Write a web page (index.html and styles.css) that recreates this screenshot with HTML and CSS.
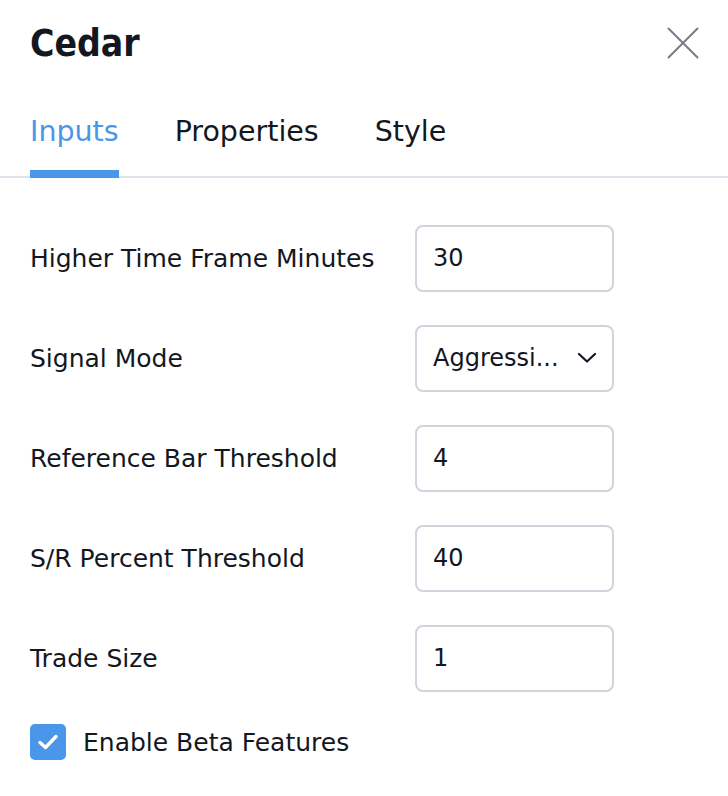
FILE: index.html
```html
<!DOCTYPE html>
<html lang="en-US">
    <head>
        <meta charset="utf-8">
        <link rel="stylesheet" href="styles.css">
    </head>
    <body>
        <div class="dialog">
            <div class="header">
                <h2 class="title">Cedar</h2>
                <button class="close" aria-label="Close">
                    <svg width="32" height="32" viewBox="0 0 32 32">
                        <path d="M1.5 1.5 L30.5 30.5 M30.5 1.5 L1.5 30.5" stroke="#787b86" stroke-width="2" stroke-linecap="round" fill="none"/>
                    </svg>
                </button>
            </div>
            <div class="tabs">
                <div class="tab active">Inputs</div>
                <div class="tab">Properties</div>
                <div class="tab">Style</div>
            </div>
            <div class="content">
                <div class="row">
                    <div class="label">Higher Time Frame Minutes</div>
                    <div class="field">30</div>
                </div>
                <div class="row">
                    <div class="label">Signal Mode</div>
                    <div class="field select">
                        <span class="value">Aggressi...</span>
                        <svg class="caret" width="20" height="12" viewBox="0 0 20 12">
                            <path d="M2 2 L10 9.5 L18 2" stroke="#131722" stroke-width="2.2" fill="none" stroke-linecap="round" stroke-linejoin="round"/>
                        </svg>
                    </div>
                </div>
                <div class="row">
                    <div class="label">Reference Bar Threshold</div>
                    <div class="field">4</div>
                </div>
                <div class="row">
                    <div class="label">S/R Percent Threshold</div>
                    <div class="field">40</div>
                </div>
                <div class="row">
                    <div class="label">Trade Size</div>
                    <div class="field">1</div>
                </div>
                <label class="check">
                    <span class="box">
                        <svg width="22" height="18" viewBox="0 0 22 18">
                            <path d="M3 9.5 L8.5 14.5 L19 3.5" stroke="#fff" stroke-width="3.4" fill="none" stroke-linecap="round" stroke-linejoin="round"/>
                        </svg>
                    </span>
                    Enable Beta Features
                </label>
            </div>
        </div>
    </body>
</html>
```

FILE: styles.css
```css
body{
    margin: 0;
    background-color: #fff;
    color: #131722;
    font-family: "DejaVu Sans", sans-serif;
}
div.dialog{
    width: 728px;
}
div.header{
    display: flex;
    align-items: center;
    justify-content: space-between;
    height: 86px;
    padding: 0 29px 0 30px;
}
h2.title{
    margin: 0;
    font-family: "DejaVu Sans Condensed", "DejaVu Sans", sans-serif;
    font-size: 37px;
    font-weight: bold;
    color: #131722;
}
button.close{
    border: none;
    background: none;
    padding: 0;
    display: flex;
}
div.tabs{
    display: flex;
    gap: 56px;
    padding: 0 30px;
    border-bottom: 2px solid #e0e3eb;
    height: 90px;
}
div.tab{
    font-size: 28.5px;
    padding-top: 29px;
    color: #131722;
}
div.tab.active{
    color: #4a96e9;
    border-bottom: 8px solid #4a96e9;
    margin-bottom: -2px;
}
div.content{
    padding: 47px 30px 0 30px;
}
div.row{
    display: flex;
    align-items: center;
    height: 66px;
    margin-bottom: 34px;
}
div.label{
    width: 385px;
    font-size: 25px;
}
div.field{
    box-sizing: border-box;
    width: 199px;
    height: 67px;
    border: 2px solid #d1d4dc;
    border-radius: 8px;
    padding: 0 16px;
    display: flex;
    align-items: center;
    font-size: 24px;
}
div.field.select{
    justify-content: space-between;
    padding-right: 15px;
}
label.check{
    display: flex;
    align-items: center;
    gap: 17px;
    font-size: 25px;
    margin-top: -1px;
}
span.box{
    width: 36px;
    height: 36px;
    border-radius: 5px;
    background-color: #4a96e9;
    display: flex;
    align-items: center;
    justify-content: center;
}
```
